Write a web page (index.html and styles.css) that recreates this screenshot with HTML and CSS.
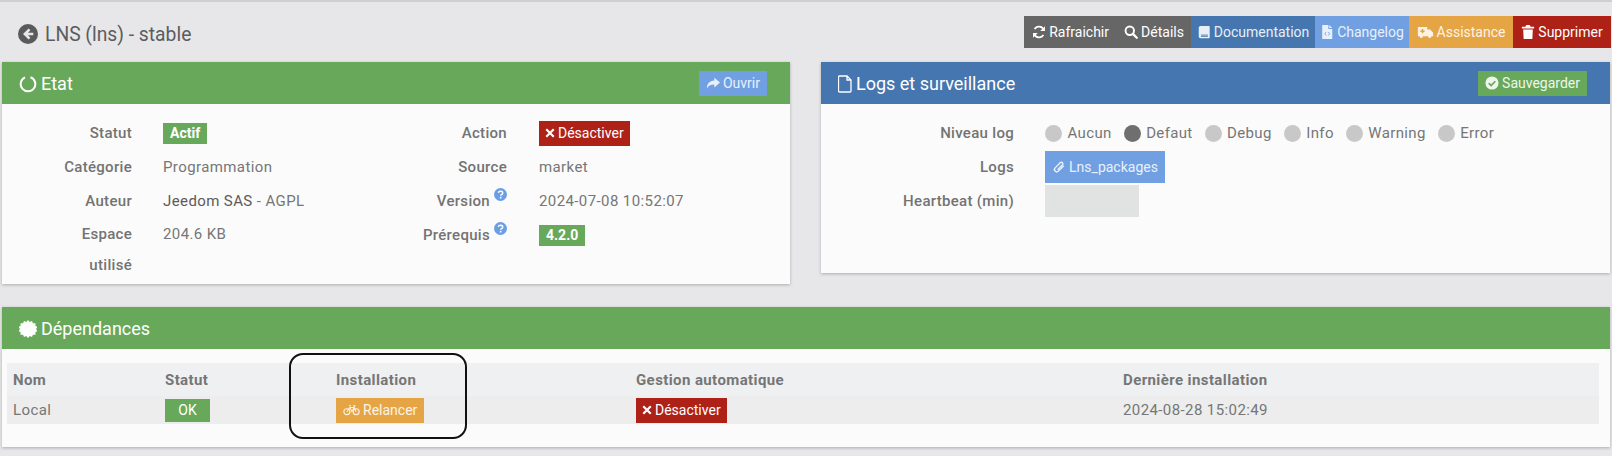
FILE: index.html
```html
<!DOCTYPE html>
<html lang="fr">
<head>
    <meta charset="UTF-8">
    <title>LNS (lns) - stable</title>
    <link rel="stylesheet" href="styles.css">
</head>
<body>
    <div id="page">
        <!-- Titre et actions -->
        <div class="top-bar">
            <h1 class="page-title">
                <svg class="back-icon" viewBox="0 0 20 20"><circle cx="10" cy="10" r="10" fill="#5a5a5c"/><path d="M10.600 4.400 5 10l5.600 5.600 1.800-1.800-2.400-2.500h5.300V8.700H10l2.400-2.500z" fill="#e7e7e9"/></svg>
                LNS (lns) - stable
            </h1>
            <div class="top-actions">
                <a class="btn btn-dark btn-refresh">
                    <svg class="ico" viewBox="0 0 16 16"><path d="M13.200 5.600A5.600 5.600 0 0 0 3 4.800" fill="none" stroke="currentColor" stroke-width="2"/><path d="M14.800 1.400v5.400H9.400z" fill="currentColor"/><path d="M2.800 10.400A5.600 5.600 0 0 0 13 11.200" fill="none" stroke="currentColor" stroke-width="2"/><path d="M1.200 14.600V9.200h5.400z" fill="currentColor"/></svg>Rafraichir
                </a>
                <a class="btn btn-dark btn-details">
                    <svg class="ico" viewBox="0 0 16 16"><circle cx="6.600" cy="6.600" r="4.800" fill="none" stroke="currentColor" stroke-width="2.200"/><path d="m10.200 10.200 4.400 4.400" stroke="currentColor" stroke-width="2.600" stroke-linecap="round"/></svg>Détails
                </a>
                <a class="btn btn-blue btn-doc">
                    <svg class="ico" viewBox="0 0 16 16"><path d="M4 1h9.500a1 1 0 0 1 1 1v12a1 1 0 0 1-1 1H4a2 2 0 0 1-2-2V3a2 2 0 0 1 2-2z" fill="currentColor"/><path d="M4.500 11.500h8M4.500 13h8" stroke="#4676b0" stroke-width="1"/></svg>Documentation
                </a>
                <a class="btn btn-light btn-changelog">
                    <svg class="ico" viewBox="0 0 16 16"><path d="M2.500 0h7v4.500H14V16H2.500z" fill="currentColor"/><path d="M10.500 0 14 3.500h-3.500z" fill="currentColor"/><path d="M7 8 5.500 10 7 12M9.500 8l1.500 2-1.500 2" fill="none" stroke="#70a0e2" stroke-width="1"/></svg>Changelog
                </a>
                <a class="btn btn-orange btn-assist">
                    <svg class="ico ico-wide" viewBox="0 0 20 16"><path d="M1 2h11v3h3.500L19 9v4h-2a2 2 0 0 1-4 0H7a2 2 0 0 1-4 0H1z" fill="currentColor"/><path d="M6.500 4.500v5M4 7h5" stroke="#e6a545" stroke-width="1.800"/></svg>Assistance
                </a>
                <a class="btn btn-red btn-delete">
                    <svg class="ico" viewBox="0 0 16 16"><path d="M6 0h4l1 2h4v2H1V2h4zM2.500 5h11L13 16H3z" fill="currentColor"/></svg>Supprimer
                </a>
            </div>
        </div>

        <div class="panel-row">
            <!-- Etat -->
            <section class="panel panel-state">
                <header class="panel-head head-green">
                    <h2>
                        <svg class="head-ico" viewBox="0 0 18 18"><path d="M11.500 2.200A7.300 7.300 0 1 1 6 2.400" fill="none" stroke="#fff" stroke-width="2"/></svg>
                        Etat
                    </h2>
                    <a class="btn btn-light btn-small">
                        <svg class="ico" viewBox="0 0 16 16"><path d="M9.500 2 16 7.500 9.500 13V9.800C5 9.800 2.500 11 1 14.500 1 9 4 5.500 9.500 5.200z" fill="currentColor"/></svg>Ouvrir
                    </a>
                </header>
                <div class="state-body">
                    <div class="form-col">
                        <div class="form-row"><span class="label label-left">Statut</span><span class="value"><span class="tag">Actif</span></span></div>
                        <div class="form-row"><span class="label label-left">Catégorie</span><span class="value">Programmation</span></div>
                        <div class="form-row"><span class="label label-left">Auteur</span><span class="value"><span class="dark">Jeedom SAS</span> - AGPL</span></div>
                        <div class="form-row form-row-tall"><span class="label label-left">Espace<br>utilisé</span><span class="value">204.6 KB</span></div>
                    </div>
                    <div class="form-col">
                        <div class="form-row"><span class="label label-mid">Action</span><span class="value value-mid"><a class="btn btn-red btn-small"><svg class="ico ico-x" viewBox="0 0 12 12"><path d="m1.500 1.500 9 9m0-9-9 9" stroke="currentColor" stroke-width="2.600"/></svg>Désactiver</a></span></div>
                        <div class="form-row"><span class="label label-mid">Source</span><span class="value value-mid">market</span></div>
                        <div class="form-row"><span class="label label-mid">Version <svg class="help" viewBox="0 0 14 14"><circle cx="7" cy="7" r="7" fill="#6b9ee3"/><path d="M4.700 5.300C4.900 2.900 9.300 2.800 9.400 5.300c0 1.800-2.200 1.700-2.200 3.100" fill="none" stroke="#fff" stroke-width="1.500"/><rect x="6.300" y="9.500" width="1.800" height="1.800" fill="#fff"/></svg></span><span class="value value-mid">2024-07-08 10:52:07</span></div>
                        <div class="form-row"><span class="label label-mid">Prérequis <svg class="help" viewBox="0 0 14 14"><circle cx="7" cy="7" r="7" fill="#6b9ee3"/><path d="M4.700 5.300C4.900 2.900 9.300 2.800 9.400 5.300c0 1.800-2.200 1.700-2.200 3.100" fill="none" stroke="#fff" stroke-width="1.500"/><rect x="6.300" y="9.500" width="1.800" height="1.800" fill="#fff"/></svg></span><span class="value value-mid"><span class="tag">4.2.0</span></span></div>
                    </div>
                </div>
            </section>

            <!-- Logs -->
            <section class="panel panel-logs">
                <header class="panel-head head-blue">
                    <h2>
                        <svg class="head-ico head-ico-file" viewBox="0 0 14 18"><path d="M1.500 1h7.500l4 4v11a1 1 0 0 1-1 1H1.500a1 1 0 0 1-1-1V2a1 1 0 0 1 1-1zM9 1v4h4" fill="none" stroke="#fff" stroke-width="1.300"/></svg>
                        Logs et surveillance
                    </h2>
                    <a class="btn btn-green btn-small">
                        <svg class="ico" viewBox="0 0 16 16"><circle cx="8" cy="8" r="7.500" fill="currentColor"/><path d="m4.300 8.200 2.700 2.700 4.800-4.900" fill="none" stroke="#68a85a" stroke-width="2"/></svg>Sauvegarder
                    </a>
                </header>
                <div class="logs-body">
                    <div class="form-row">
                        <span class="label label-logs">Niveau log</span>
                        <div class="value radios">
                            <span class="radio"><i></i>Aucun</span>
                            <span class="radio radio-on"><i></i>Defaut</span>
                            <span class="radio"><i></i>Debug</span>
                            <span class="radio"><i></i>Info</span>
                            <span class="radio"><i></i>Warning</span>
                            <span class="radio"><i></i>Error</span>
                        </div>
                    </div>
                    <div class="form-row">
                        <span class="label label-logs">Logs</span>
                        <span class="value"><a class="btn btn-light btn-log">
                            <svg class="ico" viewBox="0 0 16 16"><path d="M13.500 6.500 7.300 12.700a2.600 2.600 0 0 1-3.700-3.700l6-6a1.700 1.700 0 0 1 2.400 2.400l-5.600 5.600" fill="none" stroke="currentColor" stroke-width="1.600"/></svg>Lns_packages
                        </a></span>
                    </div>
                    <div class="form-row">
                        <span class="label label-logs">Heartbeat (min)</span>
                        <span class="value"><span class="fake-input"></span></span>
                    </div>
                </div>
            </section>
        </div>

        <!-- Dépendances -->
        <section class="panel panel-deps">
            <header class="panel-head head-green">
                <h2>
                    <svg class="head-ico" viewBox="0 0 18 18"><path d="m9 0 1.800 1.900L13 .9l.9 2.400 2.600-.1-.1 2.600 2.100 1.200L17 9l1.500 2-2.100 1.200.1 2.600-2.600-.1-.9 2.400-2.200-1L9 18l-1.800-1.900-2.200 1-.9-2.400-2.600.1.100-2.600L-.5 11 1 9-.5 7l2.100-1.200-.1-2.600 2.600.1L5 .9l2.200 1z" fill="#fff"/></svg>
                    Dépendances
                </h2>
            </header>
            <div class="deps-body">
                <table class="deps-table">
                    <colgroup><col class="c-name"><col class="c-status"><col class="c-install"><col class="c-auto"><col></colgroup>
                    <thead>
                        <tr><th>Nom</th><th>Statut</th><th>Installation</th><th>Gestion automatique</th><th>Dernière installation</th></tr>
                    </thead>
                    <tbody>
                        <tr>
                            <td>Local</td>
                            <td><span class="tag tag-ok">OK</span></td>
                            <td><a class="btn btn-orange btn-small">
                                <svg class="ico ico-wide" viewBox="0 0 20 14"><circle cx="4.500" cy="9" r="3.500" fill="none" stroke="currentColor" stroke-width="1.300"/><circle cx="15.500" cy="9" r="3.500" fill="none" stroke="currentColor" stroke-width="1.300"/><path d="M4.500 9 8 4h5l2.500 5M8 4l2.500 5 2.500-5M7 2h2.500M12 2h2l-1 2" fill="none" stroke="currentColor" stroke-width="1.200"/></svg>Relancer
                            </a></td>
                            <td><a class="btn btn-red btn-small"><svg class="ico ico-x" viewBox="0 0 12 12"><path d="m1.500 1.500 9 9m0-9-9 9" stroke="currentColor" stroke-width="2.600"/></svg>Désactiver</a></td>
                            <td>2024-08-28 15:02:49</td>
                        </tr>
                    </tbody>
                </table>
            </div>
            <div class="callout"></div>
        </section>
    </div>
</body>
</html>
```

FILE: styles.css
```css
* {
    box-sizing: border-box;
}
body {
    margin: 0;
    background-color: #e7e7e9;
    font-family: Roboto, "Liberation Sans", sans-serif;
    font-size: 15px;
    letter-spacing: 0.4px;
    color: #767676;
    overflow: hidden;
}
#page {
    height: 456px;
    padding: 0 2px 0 2px;
    border-top: 2px solid #cfcfd1;
}
.top-bar {
    display: flex;
    justify-content: space-between;
    align-items: flex-start;
    height: 60px;
    padding-top: 14px;
}
.page-title {
    display: flex;
    align-items: center;
    gap: 7px;
    height: 36px;
    margin: 0 0 0 16px;
    font-size: 19.3px;
    font-weight: 400;
    letter-spacing: 0;
    color: #5c5c5e;
}
.back-icon {
    width: 20px;
    height: 20px;
}
.top-actions {
    display: flex;
    height: 32px;
    margin-right: -1px;
}
.btn {
    display: inline-flex;
    align-items: center;
    justify-content: center;
    gap: 3px;
    height: 32px;
    padding: 0 7px;
    font-size: 14px;
    letter-spacing: 0;
    color: #fff;
    white-space: nowrap;
}
.btn-refresh {
    width: 87px;
    padding: 0 2px 0 0;
    justify-content: flex-end;
}
.btn-details {
    width: 80px;
    padding: 0 0 0 6px;
}
.btn-doc { width: 124px; }
.btn-changelog { width: 94px; }
.btn-assist { width: 104px; }
.btn-delete { width: 98px; }
.btn-small {
    height: 25px;
    padding: 0 7px;
}
.btn-small.btn-red {
    padding: 0 6px;
}
.btn-log {
    height: 32px;
    width: 120px;
}
.btn-dark { background-color: #666; }
.btn-blue { background-color: #4676b0; color: #e8eef6; }
.btn-light { background-color: #70a0e2; color: #e8f0fb; }
.btn-orange { background-color: #e6a545; color: #fdf3e4; }
.btn-red { background-color: #ae2117; }
.btn-green { background-color: #68a85a; color: #eef6ec; }
.ico {
    width: 14px;
    height: 14px;
    flex: none;
}
.ico-wide {
    width: 17px;
}
.ico-x {
    width: 10px;
    height: 10px;
}
.panel-row {
    display: flex;
    align-items: flex-start;
    gap: 31px;
}
.panel {
    background-color: #fbfbfb;
    box-shadow: 0 1px 3px rgba(0, 0, 0, 0.25);
}
.panel-state {
    flex: none;
    width: 788px;
    height: 222px;
}
.panel-logs {
    flex: 1;
    height: 211px;
}
.panel-deps {
    position: relative;
    height: 140px;
    margin-top: 23px;
}
.panel-head {
    display: flex;
    justify-content: space-between;
    align-items: center;
    height: 42px;
    padding: 0 23px 0 17px;
}
.panel-head h2 {
    display: flex;
    align-items: center;
    gap: 4px;
    margin: 0;
    padding-top: 1px;
    font-size: 18px;
    font-weight: 400;
    letter-spacing: 0;
    color: #fff;
}
.head-green { background-color: #68a85a; }
.head-blue { background-color: #4676b0; }
.head-ico {
    width: 18px;
    height: 18px;
}
.head-ico-file {
    width: 14px;
}
.state-body {
    display: flex;
    padding-top: 12px;
}
.form-col {
    width: 376px;
}
.form-row {
    display: flex;
    align-items: center;
    min-height: 34px;
}
.form-row-tall {
    align-items: flex-start;
    padding-top: 1px;
    line-height: 31px;
}
.label {
    font-weight: 500;
    text-align: right;
    letter-spacing: 0.3px;
    color: #737373;
}
.label-left { width: 130px; }
.label-mid { width: 129px; }
.label-logs { width: 193px; }
.value {
    margin-left: 31px;
}
.value-mid {
    margin-left: 32px;
}
.dark {
    color: #5a5a5a;
}
.tag {
    display: inline-flex;
    align-items: center;
    justify-content: center;
    height: 21px;
    padding: 0 7px;
    font-size: 14px;
    font-weight: 700;
    letter-spacing: 0;
    background-color: #68a85a;
    color: #fff;
}
.tag-ok {
    width: 45px;
    height: 23px;
    font-weight: 400;
}
.help {
    width: 13px;
    height: 13px;
    margin-top: -8px;
    vertical-align: 5px;
}
.logs-body {
    padding: 12px 0 0 0;
}
.radios {
    display: flex;
    gap: 12px;
    letter-spacing: 0.35px;
}
.radio {
    display: inline-flex;
    align-items: center;
    gap: 5.500px;
}
.radio i {
    width: 17px;
    height: 17px;
    border-radius: 50%;
    background-color: #c8c8c8;
}
.radio-on i {
    background-color: #6f6f6f;
}
.fake-input {
    display: block;
    width: 94px;
    height: 32px;
    background-color: #e1e2e2;
}
.deps-body {
    padding: 14px 11px 0 5px;
}
.deps-table {
    width: 100%;
    border-collapse: collapse;
    table-layout: fixed;
    background-color: #eff0f2;
}
.c-name { width: 152px; }
.c-status { width: 171px; }
.c-install { width: 300px; }
.c-auto { width: 487px; }
.deps-table th {
    height: 33px;
    padding: 0 6px;
    font-weight: 700;
    text-align: left;
    color: #767676;
}
.deps-table td {
    height: 28px;
    padding: 0 6px;
    background-color: #ecedec;
}
.callout {
    position: absolute;
    left: 287px;
    top: 46px;
    width: 178px;
    height: 86px;
    border: 2px solid #111;
    border-radius: 14px;
}
```
